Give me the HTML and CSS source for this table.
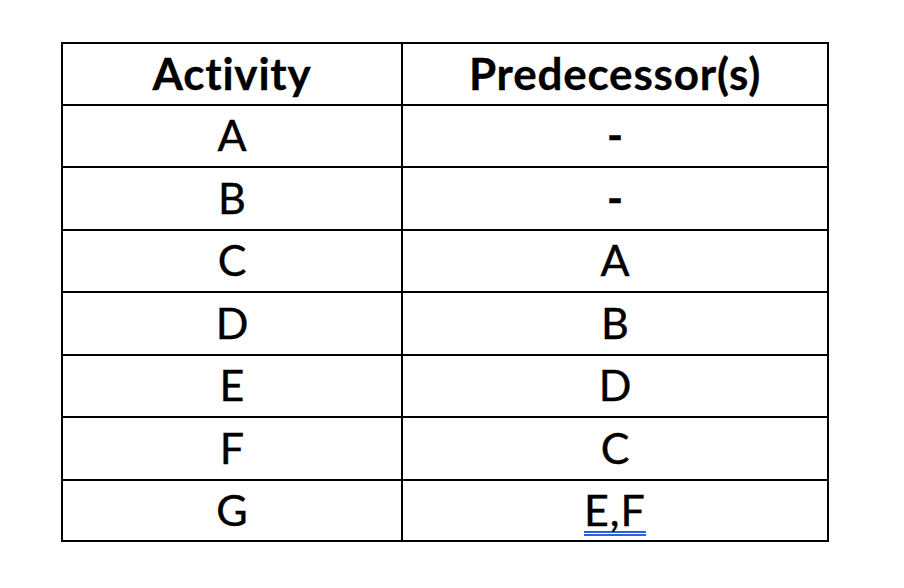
FILE: index.html
```html
<!DOCTYPE html>
<html>
<head>
<meta charset="utf-8">
<link rel="stylesheet" href="styles.css">
</head>
<body>
<div class="table">
  <div class="cell head">Activity</div>
  <div class="cell head">Predecessor(s)</div>
  <div class="cell">A</div>
  <div class="cell dash">-</div>
  <div class="cell">B</div>
  <div class="cell dash">-</div>
  <div class="cell">C</div>
  <div class="cell">A</div>
  <div class="cell">D</div>
  <div class="cell">B</div>
  <div class="cell">E</div>
  <div class="cell">D</div>
  <div class="cell">F</div>
  <div class="cell">C</div>
  <div class="cell">G</div>
  <div class="cell"><span class="spell">E,F</span></div>
</div>
</body>
</html>
```
FILE: styles.css
```css
html, body {
  margin: 0;
  padding: 0;
  background: #ffffff;
}
body {
  font-family: "Lato", "Liberation Sans", sans-serif;
  color: #000000;
}
.table {
  display: grid;
  grid-template-columns: 338px 424px;
  grid-template-rows: 60px 60px 61px 60px 61px 60px 61px 59px;
  gap: 2px;
  padding: 2px;
  background: #000000;
  width: max-content;
  margin: 42px 0 0 61px;
}
.cell {
  background: #ffffff;
  display: flex;
  align-items: center;
  justify-content: center;
  font-size: 43px;
  line-height: 1;
  padding-bottom: 3px;
  -webkit-text-stroke: 0.4px #000000;
}
.head {
  font-weight: 700;
  font-size: 44px;
  letter-spacing: 0.8px;
  -webkit-text-stroke: 0.3px #000000;
}
.dash {
  font-weight: 700;
}
.spell {
  letter-spacing: 1px;
  text-decoration: underline double #2a62d4;
  text-decoration-thickness: 2px;
  text-decoration-skip-ink: none;
  text-underline-offset: 5px;
}
```
